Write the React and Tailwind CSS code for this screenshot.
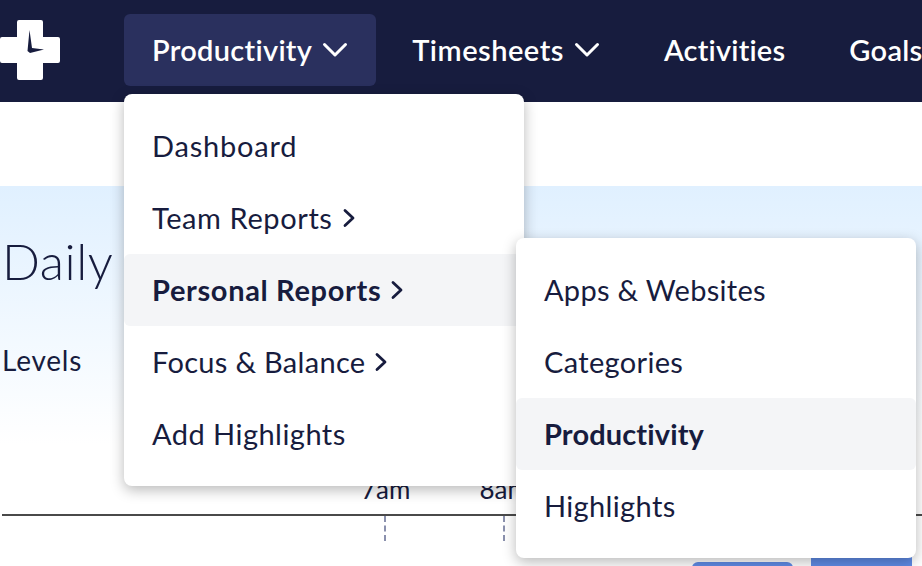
import React from 'react';

const font = 'font-["Lato","Noto_Sans",sans-serif]';

const Caret = () => (
  <svg width="26" height="16" viewBox="0 0 26 16" fill="none" className="shrink-0">
    <path d="M2.500 2.500L13 13l10.500-10.500" stroke="#fff" strokeWidth="3" strokeLinecap="round" strokeLinejoin="round" />
  </svg>
);

const Arrow = () => (
  <svg width="14" height="20" viewBox="0 0 14 20" fill="none" className="shrink-0">
    <path d="M3 2.500L11 10l-8 7.500" stroke="#171c3e" strokeWidth="2.800" strokeLinecap="round" strokeLinejoin="round" />
  </svg>
);

const NavItem = ({ label, active, caret, className }) => (
  <div className={`flex items-center gap-[10px] h-[72px] px-7 rounded-md shrink-0 ${active ? 'bg-[#2a305e]' : ''}`}>
    <span className={`text-[29px] leading-[38px] -mt-[1px] font-semibold text-white ${className}`}>{label}</span>
    {caret && <Caret />}
  </div>
);

const MenuItem = ({ label, active, arrow, className }) => (
  <div className={`flex items-center gap-[9px] h-[72px] px-7 rounded-md text-[29px] text-[#171c3e] ${active ? 'bg-[#f4f5f7] font-bold' : ''}`}>
    <span className={className}>{label}</span>
    {arrow && <Arrow />}
  </div>
);

const Logo = () => (
  <svg width="60" height="60" viewBox="0 0 60 60" className="shrink-0">
    <path d="M17 2a2 2 0 0 1 2-2h22a2 2 0 0 1 2 2v15h15a2 2 0 0 1 2 2v22a2 2 0 0 1-2 2H43v15a2 2 0 0 1-2 2H19a2 2 0 0 1-2-2V43H2a2 2 0 0 1-2-2V19a2 2 0 0 1 2-2h15z" fill="#fff" />
    <path d="M29.500 10L27.500 31l2.500 2L44 29.500 32 28z" fill="#171c3e" />
  </svg>
);

export default function App() {
  return (
    <div className={`relative w-[922px] h-[566px] overflow-hidden bg-white text-[#171c3e] ${font}`}>
      <nav className="flex items-center h-[102px] pb-[2px] bg-[#171c3e] overflow-hidden">
        <Logo />
        <div className="flex items-center gap-[8px] ml-[64px]">
          <NavItem label="Productivity" active caret className="tracking-[0.3px]" />
          <NavItem label="Timesheets" caret className="tracking-[0.5px]" />
          <NavItem label="Activities" className="tracking-[0.2px]" />
          <NavItem label="Goals" className="tracking-[0.3px]" />
        </div>
      </nav>

      <main className="mt-[84px] h-[380px] bg-gradient-to-b from-[#e0f0ff] to-white to-[68%]">
        <div className="pl-[2px] pt-[45px]">
          <h1 className="text-[50px] leading-[60px] font-light tracking-[0.5px]">Daily</h1>
          <p className="mt-[51px] text-[28px] leading-[36px] tracking-[0.8px]">Levels</p>
        </div>
        <div className="flex gap-[69px] pl-[361px] mt-[96px] text-[26px] leading-[30px]">
          <span>7am</span>
          <span>8am</span>
        </div>
        <div className="ml-[2px] mt-[10px] h-[2px] bg-[#4a4a4a]" />
        <div className="flex gap-[117px] pl-[384px]">
          <div className="h-[25px] border-l-2 border-dashed border-[#8a90ad]" />
          <div className="h-[25px] border-l-2 border-dashed border-[#8a90ad]" />
        </div>
      </main>

      {/* bars peeking out at the bottom */}
      <div className="absolute left-[692px] top-[562px] w-[101px] h-4 rounded-t-md bg-[#5f8be6]" />
      <div className="absolute left-[811px] top-[550px] w-[101px] h-6 bg-[#5f8be6]" />

      <div className="absolute left-[124px] top-[94px] w-[400px] py-4 rounded-lg bg-white shadow-[0_4px_14px_rgba(0,0,0,0.28)]">
        <MenuItem label="Dashboard" className="tracking-[0.8px]" />
        <MenuItem label="Team Reports" arrow className="tracking-[0.6px]" />
        <MenuItem label="Personal Reports" arrow active className="tracking-[0.65px]" />
        <MenuItem label="Focus & Balance" arrow className="tracking-[0.3px]" />
        <MenuItem label="Add Highlights" className="tracking-[0.47px]" />
      </div>

      <div className="absolute left-[516px] top-[238px] w-[400px] py-4 rounded-lg bg-white shadow-[0_4px_14px_rgba(0,0,0,0.28)]">
        <MenuItem label="Apps & Websites" className="tracking-[0.3px]" />
        <MenuItem label="Categories" className="tracking-[0.33px]" />
        <MenuItem label="Productivity" active className="tracking-[0.13px]" />
        <MenuItem label="Highlights" className="tracking-[0.36px]" />
      </div>
    </div>
  );
}
